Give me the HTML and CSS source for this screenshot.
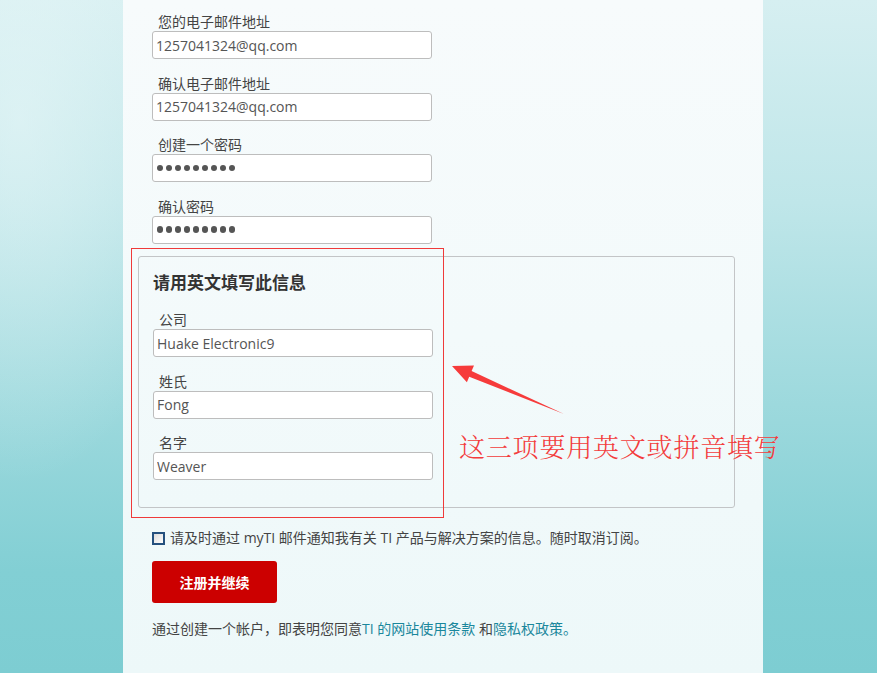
FILE: index.html
```html
<!DOCTYPE html>
<html lang="zh-CN">
<head>
<meta charset="utf-8">
<title>注册</title>
<link rel="stylesheet" href="styles.css">
</head>
<body>
<div class="page">
  <main class="panel">
    <div class="field">
      <label class="label">您的电子邮件地址</label>
      <input class="input" type="text" value="1257041324@qq.com">
    </div>
    <div class="field">
      <label class="label">确认电子邮件地址</label>
      <input class="input" type="text" value="1257041324@qq.com">
    </div>
    <div class="field">
      <label class="label">创建一个密码</label>
      <div class="input pw"><span class="dot"></span><span class="dot"></span><span class="dot"></span><span class="dot"></span><span class="dot"></span><span class="dot"></span><span class="dot"></span><span class="dot"></span><span class="dot"></span></div>
    </div>
    <div class="field">
      <label class="label">确认密码</label>
      <div class="input pw"><span class="dot"></span><span class="dot"></span><span class="dot"></span><span class="dot"></span><span class="dot"></span><span class="dot"></span><span class="dot"></span><span class="dot"></span><span class="dot"></span></div>
    </div>

    <section class="box">
      <h2 class="box-title">请用英文填写此信息</h2>
      <div class="field">
        <label class="label">公司</label>
        <input class="input" type="text" value="Huake Electronic9">
      </div>
      <div class="field">
        <label class="label">姓氏</label>
        <input class="input" type="text" value="Fong">
      </div>
      <div class="field">
        <label class="label">名字</label>
        <input class="input" type="text" value="Weaver">
      </div>
    </section>

    <div class="check">
      <span class="cb"></span>
      <span class="check-text">请及时通过 myTI 邮件通知我有关 TI 产品与解决方案的信息。随时取消订阅。</span>
    </div>

    <button class="btn" type="button">注册并继续</button>

    <p class="terms">通过创建一个帐户，即表明您同意<a class="link" href="#">TI 的网站使用条款</a> 和<a class="link" href="#">隐私权政策。</a></p>

    <div class="note-rect"></div>
    <svg class="note-arrow" width="130" height="60" viewBox="0 0 130 60">
      <polygon fill="#f63b3b" points="7,6 29,5.6 26.6,11.1 119,54 24.2,16.7 21.9,22.2"/>
    </svg>
    <div class="note-text">这三项要用英文或拼音填写</div>
  </main>
</div>
</body>
</html>
```

FILE: styles.css
```css
html, body {
  margin: 0;
  padding: 0;
}

body {
  width: 877px;
  height: 673px;
  overflow: hidden;
  font-family: "Open Sans", "Noto Sans CJK SC", sans-serif;
  background:
    radial-gradient(ellipse 260px 520px at 20px 120px, rgba(235, 248, 249, 0.55), rgba(235, 248, 249, 0) 70%),
    linear-gradient(180deg, #d6eff1 0%, #bfe6e9 30%, #9dd9dd 60%, #82cfd4 85%, #7dcdd2 100%);
}

.page {
  height: 673px;
}

.panel {
  position: relative;
  box-sizing: border-box;
  width: 640px;
  height: 673px;
  margin-left: 123px;
  padding: 13px 0 0 29px;
  background: linear-gradient(180deg, #f7fbfc 0%, #f3fafb 50%, #edf8f9 100%);
}

.field {
  display: flex;
  flex-direction: column;
  align-items: flex-start;
}

.field + .field {
  margin-top: 15.5px;
}

.label {
  display: block;
  padding-left: 6px;
  font-size: 14px;
  line-height: 18px;
  color: #444;
}

.input {
  box-sizing: border-box;
  width: 280px;
  height: 28px;
  margin: 0;
  padding: 0 3px;
  border: 1px solid #bdbdbd;
  border-radius: 3px;
  background: #fff;
  font-family: "Open Sans", "Noto Sans CJK SC", sans-serif;
  font-size: 14px;
  color: #555;
  outline: none;
}

.pw {
  display: flex;
  align-items: center;
  gap: 2.5px;
  padding-left: 3.5px;
}

.dot {
  width: 6.5px;
  height: 6.5px;
  border-radius: 50%;
  background: #555;
}

.box {
  box-sizing: border-box;
  width: 597px;
  margin: 12.5px 0 0 -14px;
  padding: 15px 0 27px 14px;
  border: 1px solid #c3c5c7;
  border-radius: 3px;
}

.box-title {
  margin: 0 0 17px;
  font-size: 17px;
  line-height: 22px;
  font-weight: 700;
  color: #333;
}

.check {
  display: flex;
  align-items: center;
  gap: 5px;
  margin-top: 20px;
  height: 20px;
}

.cb {
  box-sizing: border-box;
  width: 13px;
  height: 13px;
  border: 2px solid #24507e;
  background: linear-gradient(135deg, #dcdcdc, #fdfdfd);
}

.check-text {
  font-size: 14px;
  line-height: 20px;
  color: #444;
}

.btn {
  display: block;
  width: 125px;
  height: 42px;
  margin-top: 13px;
  padding: 0;
  border: none;
  border-radius: 3px;
  background: #cc0000;
  color: #fff;
  font-family: "Noto Sans CJK SC", sans-serif;
  font-size: 14px;
  font-weight: 700;
}

.terms {
  margin: 16px 0 0;
  font-size: 14px;
  line-height: 20px;
  color: #444;
}

.link {
  color: #1a879c;
  text-decoration: none;
}

.note-rect {
  position: absolute;
  left: 8px;
  top: 248px;
  width: 311px;
  height: 268px;
  border: 1px solid #ef3a3a;
}

.note-arrow {
  position: absolute;
  left: 322px;
  top: 360px;
}

.note-text {
  position: absolute;
  left: 336px;
  top: 431px;
  white-space: nowrap;
  font-family: "Noto Serif CJK SC", "Noto Sans CJK SC", serif;
  font-size: 26px;
  line-height: 30px;
  font-weight: 300;
  letter-spacing: 0.8px;
  color: #f33c3c;
}
```
